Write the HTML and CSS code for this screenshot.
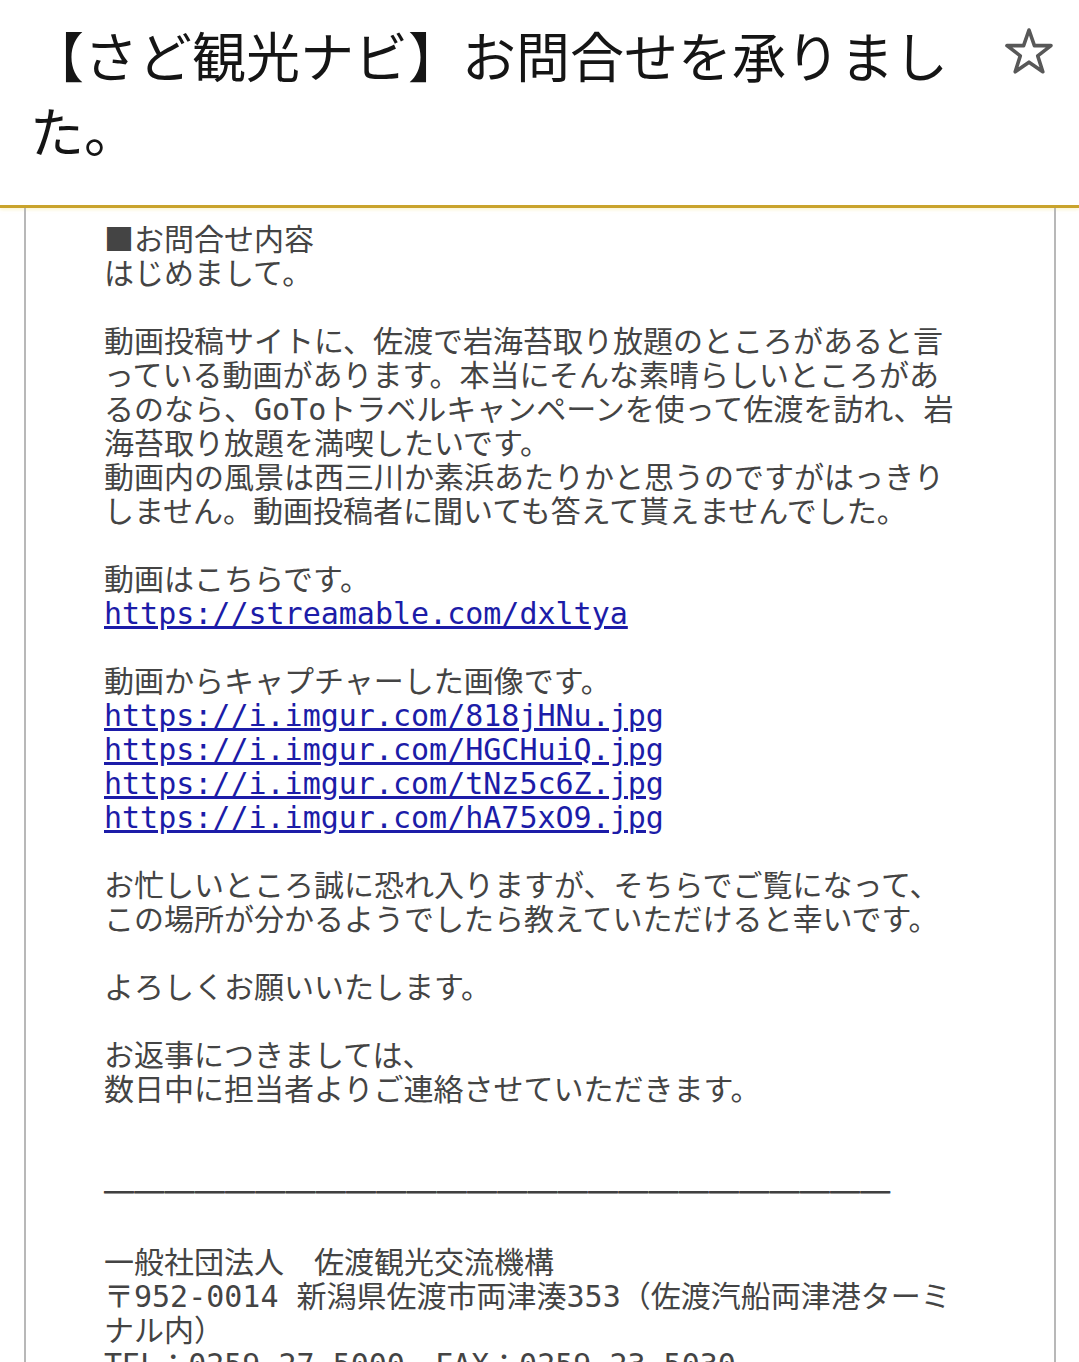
FILE: index.html
```html
<!DOCTYPE html>
<html lang="ja">
<head>
<meta charset="utf-8">
<title>【さど観光ナビ】お問合せを承りました。</title>
<link rel="stylesheet" href="styles.css">
</head>
<body>
<div class="page">
  <header class="subject">
    <h1 class="subject-title">【さど観光ナビ】お問合せを承りました。</h1>
    <button class="star" type="button" aria-label="スター">
      <svg width="50" height="48" viewBox="0 0 50 48" aria-hidden="true">
        <polygon points="25,3 30.39,18.58 47,18.58 33.72,28.83 38.8,44.8 25,35.17 11.2,44.8 16.28,28.83 3,18.58 19.61,18.58" fill="none" stroke="#585858" stroke-width="3.6" stroke-linejoin="round"/>
      </svg>
    </button>
  </header>
  <main class="message">
    <div class="message-body">
      <p><span class="mark">■</span>お問合せ内容<br>はじめまして。</p>
      <p>動画投稿サイトに、佐渡で岩海苔取り放題のところがあると言っている動画があります。本当にそんな素晴らしいところがあるのなら、GoToトラベルキャンペーンを使って佐渡を訪れ、岩海苔取り放題を満喫したいです。<br>動画内の風景は西三川か素浜あたりかと思うのですがはっきりしません。動画投稿者に聞いても答えて貰えませんでした。</p>
      <p>動画はこちらです。<br><a class="link" href="#">https://streamable.com/dxltya</a></p>
      <p>動画からキャプチャーした画像です。<br><a class="link" href="#">https://i.imgur.com/818jHNu.jpg</a><br><a class="link" href="#">https://i.imgur.com/HGCHuiQ.jpg</a><br><a class="link" href="#">https://i.imgur.com/tNz5c6Z.jpg</a><br><a class="link" href="#">https://i.imgur.com/hA75xO9.jpg</a></p>
      <p>お忙しいところ誠に恐れ入りますが、そちらでご覧になって、<br>この場所が分かるようでしたら教えていただけると幸いです。</p>
      <p>よろしくお願いいたします。</p>
      <p class="closing">お返事につきましては、<br>数日中に担当者よりご連絡させていただきます。</p>
      <p class="rule"><span class="rule-line">＿＿＿＿＿＿＿＿＿＿＿＿＿＿＿＿＿＿＿＿＿＿＿＿＿＿</span></p>
      <p class="signature">一般社団法人　佐渡観光交流機構<br>〒952-0014 新潟県佐渡市両津湊353（佐渡汽船両津港ターミナル内）<br>TEL：0259-27-5000　FAX：0259-23-5030</p>
    </div>
  </main>
</div>
</body>
</html>
```
FILE: styles.css
```css
html, body {
  margin: 0;
  padding: 0;
  background: #ffffff;
  overflow: hidden;
}

.page {
  height: 1362px;
  overflow: hidden;
  font-family: "Noto Sans CJK JP", "Noto Sans", sans-serif;
}

.subject {
  display: flex;
  align-items: flex-start;
  padding: 17px 25px 38px 30px;
  border-bottom: 3px solid #c9a32c;
  box-shadow: 0 2px 3px rgba(245, 230, 140, 0.35);
}

.subject-title {
  flex: 0 0 945px;
  margin: 0;
  font-size: 54px;
  line-height: 75px;
  font-weight: 400;
  color: #151515;
}

.star {
  margin: 10px 0 0 29px;
  padding: 0;
  border: 0;
  background: none;
  width: 50px;
  height: 48px;
  display: flex;
}

.message {
  margin: 0 23px 0 24px;
  border-left: 2px solid #b8b8b8;
  border-right: 2px solid #b8b8b8;
  padding: 12px 0 0 78px;
  min-height: 1200px;
}

.message-body {
  max-width: 860px;
  font-family: "DejaVu Sans Mono", "Noto Sans CJK JP", monospace;
  font-size: 30px;
  line-height: 34px;
  color: #444444;
}

.message-body p {
  margin: 0 0 34px;
}

.mark {
  font-family: "Noto Sans CJK JP", sans-serif;
}

.link {
  color: #1c1ca8;
  text-decoration: underline;
}

.message-body .closing {
  margin-bottom: 68px;
}

.rule {
  white-space: nowrap;
}

.rule-line {
  font-family: "Noto Sans CJK JP", sans-serif;
  font-weight: 700;
  color: #404040;
  line-height: 0;
  letter-spacing: 0.25px;
  vertical-align: 17px;
  text-shadow: 0 1px 0 #404040;
}
```
